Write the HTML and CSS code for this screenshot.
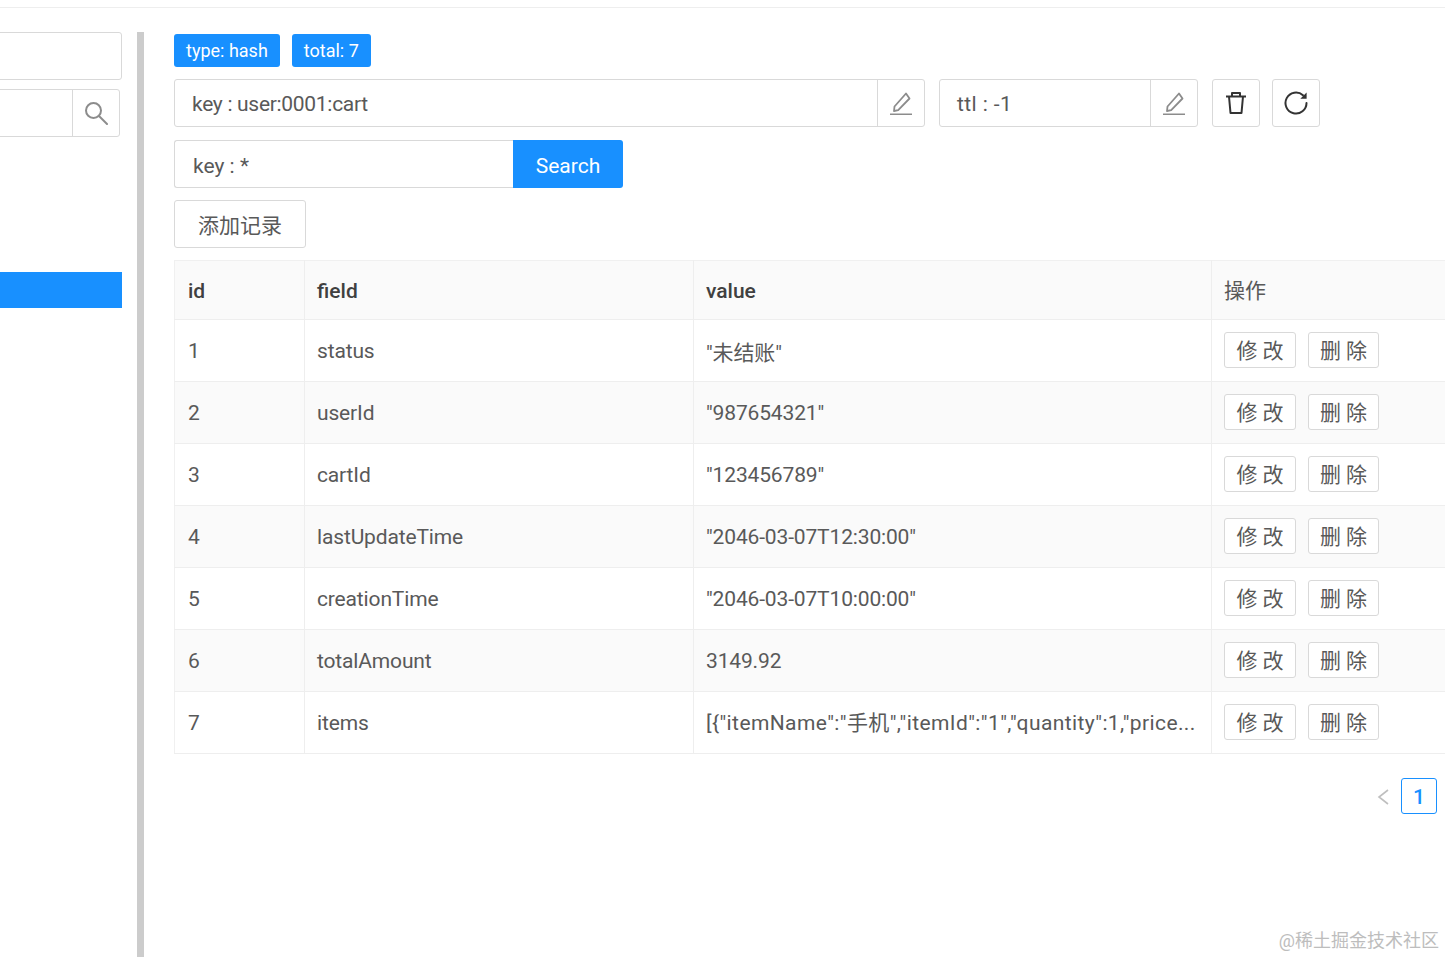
FILE: index.html
```html
<!DOCTYPE html>
<html lang="en">

<head>
    <meta charset="UTF-8">
    <meta name="viewport" content="width=device-width, initial-scale=1.0">
    <title>Redis hash</title>
    <link rel="stylesheet" href="styles.css">
</head>

<body>
    <div class="topline"></div>
    <div class="layout">
        <div class="sidebar">
            <div class="side-input"></div>
            <div class="side-search">
                <div class="side-search-field"></div>
                <div class="side-search-btn">
                    <svg width="24" height="24" viewBox="0 0 24 24" fill="none" stroke="#8c8c8c" stroke-width="2">
                        <circle cx="9.5" cy="9.5" r="7.5" />
                        <path d="M15 15l8 8" stroke-linecap="round" />
                    </svg>
                </div>
            </div>
            <div class="side-active"></div>
        </div>
        <div class="divider"></div>
        <div class="main">
            <div class="tags">
                <span class="tag">type: hash</span>
                <span class="tag">total: 7</span>
            </div>
            <div class="key-row">
                <div class="input-group key-group">
                    <div class="input-text">key : user:0001:cart</div>
                    <div class="addon">
                        <svg width="24" height="24" viewBox="0 0 24 24" fill="none" stroke="#8c8c8c" stroke-width="1.8">
                            <path d="M5.5 15.5L5 20l4.2-.8L20.5 7.5 17 2.5z" stroke-linejoin="round" />
                            <path d="M1 23.5h22" stroke-width="2" />
                        </svg>
                    </div>
                </div>
                <div class="input-group ttl-group">
                    <div class="input-text">ttl : -1</div>
                    <div class="addon">
                        <svg width="24" height="24" viewBox="0 0 24 24" fill="none" stroke="#8c8c8c" stroke-width="1.8">
                            <path d="M5.5 15.5L5 20l4.2-.8L20.5 7.5 17 2.5z" stroke-linejoin="round" />
                            <path d="M1 23.5h22" stroke-width="2" />
                        </svg>
                    </div>
                </div>
                <button class="icon-btn">
                    <svg width="22" height="24" viewBox="0 0 22 24" fill="none" stroke="#333" stroke-width="2">
                        <path d="M1 5.5h20M4 5.5l1.5 16.5h11L18 5.5M7 5.5V2h8v3.5" stroke-linejoin="round" />
                    </svg>
                </button>
                <button class="icon-btn">
                    <svg width="24" height="24" viewBox="0 0 24 24" fill="none" stroke="#333" stroke-width="2">
                        <path d="M22.5 12A10.5 10.5 0 1 1 19 4.2" stroke-linecap="round" />
                        <path d="M22.6 1.5v6.3h-6.3z" fill="#333" stroke="none" />
                    </svg>
                </button>
            </div>
            <div class="search-row">
                <div class="search-input">key : *</div>
                <button class="search-btn">Search</button>
            </div>
            <button class="add-btn">添加记录</button>
            <div class="table-wrap">
                <table class="data-table">
                    <colgroup>
                        <col class="col-id">
                        <col class="col-field">
                        <col class="col-value">
                        <col class="col-action">
                    </colgroup>
                    <thead>
                        <tr>
                            <th>id</th>
                            <th>field</th>
                            <th>value</th>
                            <th class="th-action">操作</th>
                        </tr>
                    </thead>
                    <tbody>
                        <tr>
                            <td>1</td>
                            <td>status</td>
                            <td>"未结账"</td>
                            <td><button class="row-btn">修 改</button><button class="row-btn">删 除</button></td>
                        </tr>
                        <tr class="alt">
                            <td>2</td>
                            <td>userId</td>
                            <td>"987654321"</td>
                            <td><button class="row-btn">修 改</button><button class="row-btn">删 除</button></td>
                        </tr>
                        <tr>
                            <td>3</td>
                            <td>cartId</td>
                            <td>"123456789"</td>
                            <td><button class="row-btn">修 改</button><button class="row-btn">删 除</button></td>
                        </tr>
                        <tr class="alt">
                            <td>4</td>
                            <td>lastUpdateTime</td>
                            <td>"2046-03-07T12:30:00"</td>
                            <td><button class="row-btn">修 改</button><button class="row-btn">删 除</button></td>
                        </tr>
                        <tr>
                            <td>5</td>
                            <td>creationTime</td>
                            <td>"2046-03-07T10:00:00"</td>
                            <td><button class="row-btn">修 改</button><button class="row-btn">删 除</button></td>
                        </tr>
                        <tr class="alt">
                            <td>6</td>
                            <td>totalAmount</td>
                            <td>3149.92</td>
                            <td><button class="row-btn">修 改</button><button class="row-btn">删 除</button></td>
                        </tr>
                        <tr>
                            <td>7</td>
                            <td>items</td>
                            <td class="long-value">[{"itemName":"手机","itemId":"1","quantity":1,"price...</td>
                            <td><button class="row-btn">修 改</button><button class="row-btn">删 除</button></td>
                        </tr>
                    </tbody>
                </table>
            </div>
            <div class="pager">
                <svg class="pager-prev" width="12" height="16" viewBox="0 0 12 16" fill="none" stroke="#bfbfbf" stroke-width="1.6">
                    <path d="M11 1L2 8l9 7" />
                </svg>
                <span class="page-num">1</span>
            </div>
        </div>
    </div>
    <div class="watermark">@稀土掘金技术社区</div>
</body>

</html>
```

FILE: styles.css
```css
* {
    box-sizing: border-box;
}

html,
body {
    height: 100%;
}

body {
    margin: 0;
    padding: 0;
    overflow: hidden;
    background-color: #fff;
    color: #595959;
    font-family: Roboto, "Noto Sans CJK SC", sans-serif;
    font-size: 21px;
}

button {
    font-family: inherit;
    cursor: pointer;
}

.topline {
    height: 8px;
    border-bottom: 1px solid #eeeeee;
}

.layout {
    display: flex;
    height: 949px;
    padding-top: 24px;
}

/* left column is cut off by the window */
.sidebar {
    width: 122px;
    flex-shrink: 0;
    overflow: hidden;
}

.side-input {
    height: 48px;
    margin-left: -10px;
    border: 1px solid #d9d9d9;
    border-radius: 3px;
}

.side-search {
    display: flex;
    width: 130px;
    height: 48px;
    margin: 9px 0 0 -10px;
    border: 1px solid #d9d9d9;
    border-radius: 3px;
}

.side-search-field {
    flex: 1;
}

.side-search-btn {
    width: 47px;
    display: flex;
    align-items: center;
    justify-content: center;
    border-left: 1px solid #d9d9d9;
}

.side-active {
    height: 36px;
    margin-top: 135px;
    background-color: #1890ff;
}

.divider {
    width: 7px;
    margin-left: 15px;
    flex-shrink: 0;
    background-color: #cccccc;
}

.main {
    flex: 1;
    min-width: 0;
    padding: 2px 0 0 30px;
    overflow: hidden;
}

.tags {
    display: flex;
    gap: 12px;
}

.tag {
    height: 33px;
    padding: 0 12px;
    line-height: 33px;
    font-size: 18px;
    color: #fff;
    background-color: #1890ff;
    border-radius: 3px;
}

.key-row {
    display: flex;
    margin-top: 12px;
}

.input-group {
    display: flex;
    height: 48px;
    border: 1px solid #d9d9d9;
    border-radius: 3px;
}

.key-group {
    width: 751px;
    letter-spacing: -0.3px;
}

.ttl-group {
    width: 259px;
    margin-left: 14px;
    letter-spacing: 0.4px;
}

.input-text {
    flex: 1;
    padding-left: 17px;
    line-height: 48px;
}

.addon {
    width: 47px;
    display: flex;
    align-items: center;
    justify-content: center;
    border-left: 1px solid #d9d9d9;
}

.icon-btn {
    width: 48px;
    height: 48px;
    margin-left: 14px;
    padding: 0;
    display: flex;
    align-items: center;
    justify-content: center;
    background-color: #fff;
    border: 1px solid #d9d9d9;
    border-radius: 3px;
}

.icon-btn+.icon-btn {
    margin-left: 12px;
}

.search-row {
    display: flex;
    margin-top: 13px;
}

.search-input {
    width: 339px;
    height: 48px;
    padding-left: 18px;
    line-height: 50px;
    border: 1px solid #d9d9d9;
    border-right: none;
    border-radius: 3px 0 0 3px;
}

.search-btn {
    width: 110px;
    height: 48px;
    padding: 4px 0 0;
    font-size: 21px;
    color: #fff;
    background-color: #1890ff;
    border: none;
    border-radius: 0 3px 3px 0;
}

.add-btn {
    display: block;
    width: 132px;
    height: 48px;
    margin-top: 12px;
    padding: 0;
    font-size: 21px;
    color: #595959;
    background-color: #fff;
    border: 1px solid #d9d9d9;
    border-radius: 3px;
}

.table-wrap {
    margin-top: 12px;
    width: 1290px;
}

.data-table {
    width: 100%;
    table-layout: fixed;
    border-collapse: collapse;
    border-top: 1px solid #f0f0f0;
    border-left: 1px solid #f0f0f0;
}

.col-id {
    width: 130px;
}

.col-field {
    width: 389px;
}

.col-value {
    width: 518px;
}

.data-table th,
.data-table td {
    padding: 0 12px;
    text-align: left;
    border-right: 1px solid #eeeeee;
    border-bottom: 1px solid #eeeeee;
    white-space: nowrap;
    overflow: hidden;
}

.data-table th:first-child,
.data-table td:first-child {
    padding-left: 13px;
}

.data-table th {
    height: 59px;
    padding-top: 2px;
    font-weight: 500;
    color: #404040;
    background-color: #fafafa;
}

.data-table th.th-action {
    padding-top: 0;
    padding-bottom: 3px;
    font-weight: 400;
    color: #595959;
}

.data-table td {
    height: 62px;
    letter-spacing: -0.15px;
}

.data-table td.long-value {
    padding-bottom: 3px;
    letter-spacing: 0.4px;
}

.data-table tr.alt td {
    background-color: #fafafa;
}

.row-btn {
    width: 72px;
    height: 36px;
    padding: 2px 0 0;
    margin: 0 12px 2px 0;
    font-size: 21px;
    line-height: 32px;
    color: #595959;
    background-color: #fff;
    border: 1px solid #d9d9d9;
    border-radius: 3px;
    vertical-align: middle;
}

.row-btn+.row-btn {
    width: 71px;
}

.pager {
    display: flex;
    align-items: center;
    justify-content: flex-end;
    gap: 12px;
    margin-top: 24px;
    padding-right: 8px;
}

.pager-prev {
    margin-top: 2px;
}

.page-num {
    width: 36px;
    height: 36px;
    line-height: 36px;
    text-align: center;
    font-weight: 500;
    color: #1890ff;
    border: 1px solid #1890ff;
    border-radius: 3px;
}

.watermark {
    position: absolute;
    right: 6px;
    bottom: 5px;
    font-size: 18px;
    color: #bdbdbd;
}
```
